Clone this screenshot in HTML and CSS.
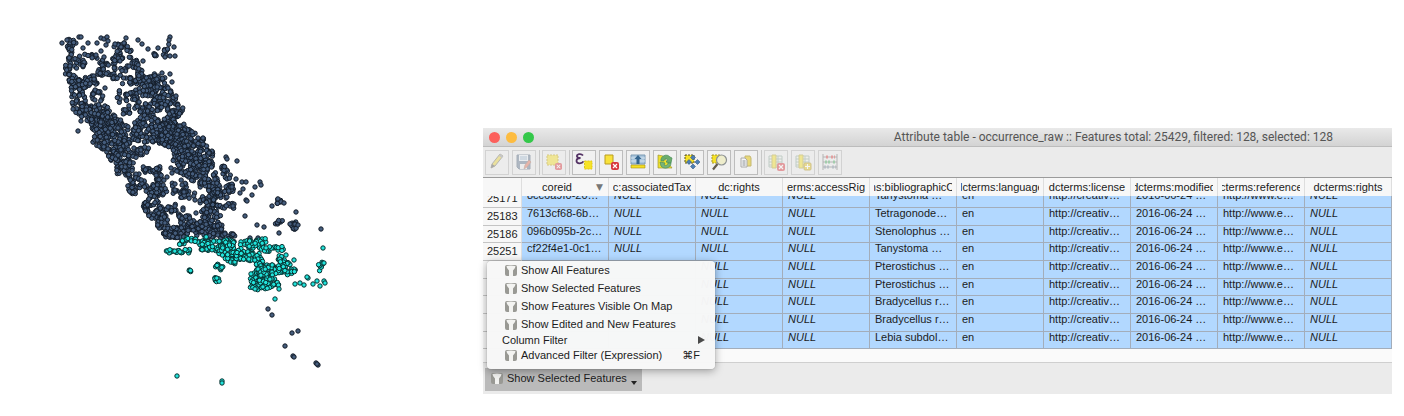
FILE: index.html
```html
<!DOCTYPE html>
<html lang="en">
<head>
<meta charset="utf-8">
<title>Attribute table</title>
<link rel="stylesheet" href="styles.css">
</head>
<body>
<svg width="0" height="0" class="defs" aria-hidden="true">
  <symbol id="filter" viewBox="0 0 12 12">
    <rect x="0" y="1" width="12" height="11" rx="2" fill="#999994"/>
    <path d="M1.500 2Q6 .8 10.500 2Q10.500 4.500 8 6.500V12H4V6.500Q1.500 4.500 1.500 2Z" fill="#f3f3f1"/>
  </symbol>
  <symbol id="deny" viewBox="0 0 8 8">
    <rect width="8" height="8" rx="2" fill="#d8383f"/><path d="M2 2l4 4M6 2L2 6" stroke="#fff" stroke-width="1.200"/>
  </symbol>
</svg>
<main class="page">
  <svg class="map" id="map" viewBox="0 0 483 416" role="img" aria-label="Occurrence map"></svg>
  <section class="window">
    <header class="titlebar">
      <div class="lights"><button class="light red" aria-label="Close"></button><button class="light amber" aria-label="Minimize"></button><button class="light green" aria-label="Zoom"></button></div>
      <h1 class="title">Attribute table - occurrence_raw :: Features total: 25429, filtered: 128, selected: 128</h1>
    </header>
    <div class="toolbar">
      <button class="tool" disabled aria-label="Toggle editing"><svg viewBox="0 0 18 18"><path d="M3 15l1-4L12 1l3 2L7 13z" fill="#e8d23e" stroke="#77756b"/><path d="M3 15l1-4 3 2z" fill="#555"/><path d="M12 1l3 2-1 2-3-2z" fill="#999"/></svg></button>
      <button class="tool" disabled aria-label="Save edits"><svg viewBox="0 0 18 18"><path d="M2 2h13v14H4l-2-2z" fill="#647991" stroke="#52667c"/><path d="M4 2h9v6H4z" fill="#e6edf3"/><path d="M5 4h7M5 6h7" stroke="#7a9ab8"/><path d="M5 11h7v5H5z" fill="#eee"/><path d="M9 16l1-4 4-5 2 2-4 5z" fill="#e5735b" stroke="#9d6a58" stroke-width=".7"/></svg></button>
      <span class="sep"></span>
      <button class="tool" disabled aria-label="Delete selected"><svg viewBox="0 0 18 18"><path d="M2 2h11v10H2z" fill="#f4de2c" stroke="#b99f0b" stroke-dasharray="2 1"/><use href="#deny" x="10" y="10" width="7" height="7"/></svg></button>
      <span class="sep"></span>
      <button class="tool" aria-label="Select by expression"><svg viewBox="0 0 18 18"><path d="M8 2.500C6 0 1.500 1 2 3.500Q2.400 5.300 5.500 5Q1.500 5.200 1.500 8C1.600 11 7 11 8.500 8.400" fill="none" stroke="#533264" stroke-width="1.800"/><path d="M9.500 8h7.500v8H9.500z" fill="#f7e326" stroke="#e0c61a" stroke-dasharray="2 1"/></svg></button>
      <button class="tool" aria-label="Unselect all"><svg viewBox="0 0 18 18"><path d="M3 2h8v9H3z" fill="#f8e23b" stroke="#b99c21"/><use href="#deny" x="9" y="9" width="8" height="8"/></svg></button>
      <button class="tool" aria-label="Move selection to top"><svg viewBox="0 0 18 18"><path d="M2 2h14v9H2z" fill="#a9c6dd" stroke="#7d9ab3"/><path d="M2 5h14M2 8h14" stroke="#d5e4ef"/><path d="M9 2l3.500 4H10.500v5h-3V6H5.500z" fill="#34658f"/><path d="M2 12h14v3H2z" fill="#f6df22" stroke="#a69018" stroke-width=".6"/></svg></button>
      <button class="tool" aria-label="Invert selection"><svg viewBox="0 0 18 18"><path d="M2 2l5 1 9 12H2z" fill="#efe12c" stroke="#9f9636" stroke-width=".7"/><path d="M5 8C4 3 11 0 14 4l2 1-1 5-5-1 2-2C10 5 8 6 8 8z" fill="#6aac6b" stroke="#488c57" stroke-width=".7"/><path d="M15 10c0 5-7 7-10 3l-1-4 5 1-1 2c2 1 4 0 4-2z" fill="#79b479" stroke="#4a8f5b" stroke-width=".7"/></svg></button>
      <button class="tool" aria-label="Pan to selection"><svg viewBox="0 0 18 18"><path d="M2 2h9v8H2z" fill="#f5e127" stroke="#554e20" stroke-dasharray="2 1"/><path d="M10 2l2.500 2.500L10 7 7.500 4.500zM14.500 6.500L17 9l-2.500 2.500L12 9zM6 6.500L8.500 9 6 11.500 3.500 9zM10 11l2.500 2.500L10 16l-2.500-2.500z" fill="#4d7eb4" stroke="#365d87" stroke-width=".6"/></svg></button>
      <button class="tool" aria-label="Zoom to selection"><svg viewBox="0 0 18 18"><path d="M2 2h9v8H2z" fill="#f5e127" stroke="#a4962d" stroke-dasharray="2 1"/><circle cx="11.500" cy="7" r="5" fill="#eeedcc" stroke="#8d9293" stroke-width="1.200"/><path d="M7.500 11L3 16.500" stroke="#635b4c" stroke-width="2.200"/></svg></button>
      <button class="tool" aria-label="Copy rows"><svg viewBox="0 0 18 18"><path d="M8 3h5l1 2v8H8z" fill="#e8d878" stroke="#c5b873"/><path d="M4 5h4l2 2v7H4z" fill="#f5f5f5" stroke="#aaa"/><path d="M5.500 8h3M5.500 10h3M5.500 12h3" stroke="#8c9298"/></svg></button>
      <span class="sep"></span>
      <button class="tool" disabled aria-label="Delete column"><svg viewBox="0 0 18 18"><path d="M2 3h13v11H2zM2 6h13M2 9h13M2 12h13M11 3v11" fill="#edf2ed" stroke="#8fa89b"/><path d="M5 2h4v13H5z" fill="#f3df27" stroke="#b7a732"/><use href="#deny" x="10" y="10" width="8" height="8"/></svg></button>
      <button class="tool" disabled aria-label="New column"><svg viewBox="0 0 18 18"><path d="M2 3h13v11H2zM2 6h13M2 9h13M2 12h13M11 3v11" fill="#edf2ed" stroke="#8fa89b"/><path d="M5 2h4v13H5z" fill="#f3df27" stroke="#b7a732"/><rect x="10" y="10" width="7" height="7" rx="1" fill="#e5c31f" stroke="#af9115"/><path d="M13.500 11v5M11 13.500h5" stroke="#fff"/></svg></button>
      <button class="tool" disabled aria-label="Field calculator"><svg viewBox="0 0 18 18"><path d="M2 1v16M16 1v16M2 4h14M2 9h14M2 14h14" stroke="#737373"/><path d="M5 4h3M10 4h4" stroke="#d64040" stroke-width="3" stroke-dasharray="2 1"/><path d="M4 9h5M12 9h3" stroke="#4da960" stroke-width="3" stroke-dasharray="2 1"/><path d="M3 14h5M11 14h4" stroke="#7d8b9b" stroke-width="3" stroke-dasharray="2 1"/></svg></button>
    </div>
    <table class="grid">
      <colgroup><col class="num-col"><col span="10"></colgroup>
      <thead><tr>
        <th></th>
        <th><div class="head sorted">coreid<span class="sort">▼</span></div></th>
        <th><div class="head">dc:associatedTaxa</div></th>
        <th><div class="head">dc:rights</div></th>
        <th><div class="head">dcterms:accessRights</div></th>
        <th><div class="head">dcterms:bibliographicCitation</div></th>
        <th><div class="head">dcterms:language</div></th>
        <th><div class="head">dcterms:license</div></th>
        <th><div class="head">dcterms:modified</div></th>
        <th><div class="head">dcterms:references</div></th>
        <th><div class="head">dcterms:rights</div></th>
      </tr></thead>
      <tbody>
        <tr class="cut"><th><div>25171</div></th><td><div>8cc6a9f0-20…</div></td><td><div><i>NULL</i></div></td><td><div><i>NULL</i></div></td><td><div><i>NULL</i></div></td><td><div>Tanystoma …</div></td><td><div>en</div></td><td><div>http://creativ…</div></td><td><div>2016-06-24 …</div></td><td><div>http://www.e…</div></td><td><div><i>NULL</i></div></td></tr>
        <tr><th>25183</th><td>7613cf68-6b…</td><td><i>NULL</i></td><td><i>NULL</i></td><td><i>NULL</i></td><td>Tetragonode…</td><td>en</td><td>http://creativ…</td><td>2016-06-24 …</td><td>http://www.e…</td><td><i>NULL</i></td></tr>
        <tr><th>25186</th><td>096b095b-2c…</td><td><i>NULL</i></td><td><i>NULL</i></td><td><i>NULL</i></td><td>Stenolophus …</td><td>en</td><td>http://creativ…</td><td>2016-06-24 …</td><td>http://www.e…</td><td><i>NULL</i></td></tr>
        <tr><th>25251</th><td>cf22f4e1-0c1…</td><td><i>NULL</i></td><td><i>NULL</i></td><td><i>NULL</i></td><td>Tanystoma …</td><td>en</td><td>http://creativ…</td><td>2016-06-24 …</td><td>http://www.e…</td><td><i>NULL</i></td></tr>
        <tr><th></th><td></td><td></td><td><i>NULL</i></td><td><i>NULL</i></td><td>Pterostichus …</td><td>en</td><td>http://creativ…</td><td>2016-06-24 …</td><td>http://www.e…</td><td><i>NULL</i></td></tr>
        <tr><th></th><td></td><td></td><td><i>NULL</i></td><td><i>NULL</i></td><td>Pterostichus …</td><td>en</td><td>http://creativ…</td><td>2016-06-24 …</td><td>http://www.e…</td><td><i>NULL</i></td></tr>
        <tr><th></th><td></td><td></td><td><i>NULL</i></td><td><i>NULL</i></td><td>Bradycellus r…</td><td>en</td><td>http://creativ…</td><td>2016-06-24 …</td><td>http://www.e…</td><td><i>NULL</i></td></tr>
        <tr><th></th><td></td><td></td><td><i>NULL</i></td><td><i>NULL</i></td><td>Bradycellus r…</td><td>en</td><td>http://creativ…</td><td>2016-06-24 …</td><td>http://www.e…</td><td><i>NULL</i></td></tr>
        <tr><th></th><td></td><td></td><td><i>NULL</i></td><td><i>NULL</i></td><td>Lebia subdol…</td><td>en</td><td>http://creativ…</td><td>2016-06-24 …</td><td>http://www.e…</td><td><i>NULL</i></td></tr>
      </tbody>
    </table>
    <div class="scroll"></div>
    <footer class="footer">
      <button class="picker"><svg class="ico"><use href="#filter"/></svg>Show Selected Features<span class="caret"></span></button>
      <div class="menu">
        <button class="item"><svg class="ico"><use href="#filter"/></svg>Show All Features</button>
        <button class="item"><svg class="ico"><use href="#filter"/></svg>Show Selected Features</button>
        <button class="item"><svg class="ico"><use href="#filter"/></svg>Show Features Visible On Map</button>
        <button class="item"><svg class="ico"><use href="#filter"/></svg>Show Edited and New Features</button>
        <button class="item plain">Column Filter<span class="arrow"></span></button>
        <button class="item low"><svg class="ico"><use href="#filter"/></svg>Advanced Filter (Expression)<span class="key">⌘F</span></button>
      </div>
    </footer>
  </section>
</main>
<script src="map.js"></script>
</body>
</html>
```
FILE: styles.css
```css
* { box-sizing: border-box; }
body { margin: 0; background: #fff; color: #1c1c1c; font: 11px/14px "Liberation Sans", Arial, sans-serif; }
button { font: inherit; color: inherit; border: 0; padding: 0; margin: 0; background: none; text-align: left; }
.defs { position: absolute; }
.page { display: grid; grid-template-columns: 483fr 909fr 12fr; align-items: start; }
.map { display: block; width: 100%; }
.window { margin-top: 128px; min-width: 0; background: #ebebeb; }

.titlebar { display: flex; align-items: center; justify-content: space-between; height: 19px; padding: 0 59px 0 6px; background: linear-gradient(#e9e9e9, #d3d3d3); border-bottom: 1px solid #bcbcbc; }
.lights { display: flex; gap: 6px; }
.light { width: 11px; height: 11px; border-radius: 50%; }
.red { background: #fc605c; }
.amber { background: #fdbc40; }
.green { background: #34c84a; }
.title { margin: 0; font: 12px/14px Roboto, sans-serif; color: #555; white-space: nowrap; }

.toolbar { display: flex; align-items: center; gap: 3px; height: 31px; padding: 0 2px; border-bottom: 1px solid #9b9b9b; }
.tool { display: flex; align-items: center; justify-content: center; width: 24px; height: 25px; background: #f1f1f1; border: 1px solid #bdbdbd; }
.tool svg { width: 18px; height: 18px; }
.tool:disabled { border-color: #d2d2d2; background: #ececec; }
.tool:disabled svg { opacity: .45; }
.sep { width: 1px; height: 25px; margin-right: -1px; background: #c8c8c8; }

.grid { width: 100%; table-layout: fixed; border-collapse: separate; border-spacing: 0; }
.num-col { width: 39px; }
.grid th, .grid td { padding: 0; font-weight: 400; white-space: nowrap; overflow: hidden; text-align: left; }
.grid thead th { height: 18px; background: #f7f7f7; border-right: 1px solid #dedede; }
.head { display: flex; justify-content: center; margin: 0 4px; overflow: hidden; position: relative; }
.sorted { padding-right: 16px; }
.sort { position: absolute; right: 1px; font: 9px/14px "DejaVu Sans", sans-serif; color: #777; }
.grid tbody td { height: 18px; padding: 0 0 2px 5px; line-height: 11px; vertical-align: top; background: #b2d8ff; border-right: 1px solid #a3adba; border-bottom: 1px solid #a3adba; }
.grid tbody tr:nth-child(3n) td, .grid tbody tr:nth-child(3n) th { height: 17px; }
.grid tbody th { height: 18px; padding: 0 0 0 4px; vertical-align: top; line-height: 16px; background: #f7f7f7; border-right: 1px solid #dedede; border-bottom: 1px solid #c4c4c4; }
.grid tbody .cut td, .grid tbody .cut th { height: 12px; padding-top: 0; padding-bottom: 0; }
.cut div { display: flex; align-items: flex-end; height: 11px; padding-bottom: 6px; overflow: hidden; }
.cut th div { padding-bottom: 1px; }
.scroll { height: 14px; background: #fafafa; border-bottom: 1px solid #cfcfcf; }

.footer { position: relative; height: 31px; padding: 5px 2px 3px; }
.picker { display: flex; align-items: center; width: 157px; height: 23px; padding: 0 0 3px 6px; background: #bababa; white-space: nowrap; }
.ico { flex: none; width: 12px; height: 12px; margin-right: 4px; }
.caret { margin: 10px 0 0 4px; border: 3px solid transparent; border-top: 4px solid #222; border-bottom: 0; }
.menu { position: absolute; left: 4px; bottom: 25px; width: 228px; padding: 0 0 6px; background: rgba(247, 247, 247, .98); border-radius: 4px; box-shadow: 0 2px 8px rgba(0, 0, 0, .35), 0 0 1px rgba(0, 0, 0, .4); }
.item { display: flex; align-items: center; width: 100%; height: 18px; padding: 0 10px 0 18px; white-space: nowrap; }
.item.plain { height: 14px; padding-left: 15px; }
.item.low { height: 16px; }
.arrow { margin-left: auto; border: 4px solid transparent; border-left: 7px solid #4a4a4a; border-right: 0; }
.key { margin-left: auto; padding-right: 5px; font-family: "Liberation Sans", "DejaVu Sans", sans-serif; }
```
FILE: map.js
```js
var SVG = 'http://www.w3.org/2000/svg';
var map = document.getElementById('map');
var seed = 77;
function rand() { seed = (seed * 16807) % 2147483647; return seed / 2147483647; }

// Bare ground: [cx, cy, rx, ry]
var gaps = [[104,84,7,4],[111,97,6,12],[128,120,7,5],[122,106,4,4],[84,71,6,4],[164,114,4,4],[137,183,4,3],[99,96,3,3],
  [148,160,9,3],[153,166,4,4],[176,177,4,5],[186,204,9,6],[164,201,4,4],[127,90,4,4],[155,124,2,2],[166,173,3,4],[196,212,4,8],[196,186,3,3],[153,208,4,3],[172,222,5,3]];

// Sampling tracks: [width, spacing area, x, y, x, y, ...]
var dark = [
  [7,7,69,42,76,42],[5,7,70,46,70,58,66,74],[13,9,74,66,84,61],[10,8,68,78,90,84,100,72,106,62],[4,9,84,56,98,57],
  [12,7,112,56,122,54],[5,10,114,47,126,45,130,52],[7,8,130,56,137,68,141,76],[7,9,98,71,120,77],[5,10,121,70,130,67],[3,9,114,60,115,70],
  [8,8,122,80,150,80],[6,10,150,78,168,80],[10,8,138,72,150,88],[3,16,118,78,119,104],[15,8,78,80,80,110],[12,9,92,94,108,101],
  [11,9,90,108,110,111],[9,9,125,98,142,92],[6,9,136,96,138,112],[22,8,147,82,162,95,170,112,178,118],[12,8,80,108,98,125],
  [22,8,92,118,128,132],[24,8,140,112,176,124],[9,9,122,112,130,110],[28,8,100,130,124,150],[20,8,118,146,134,160],[20,8,132,132,180,134],
  [10,7,178,126,194,136],[22,8,152,130,184,142,184,162],[14,9,184,148,206,142],[10,8,112,154,122,172],[14,8,124,162,134,174,134,194],
  [8,9,138,152,150,148],[6,9,140,170,160,169],[8,9,154,168,166,194],[22,8,178,160,202,172],[14,8,196,156,214,158],[12,8,206,162,212,182],
  [14,7,210,180,218,200],[9,9,216,194,232,186],[6,9,222,166,230,180],[7,10,195,194,180,196],[7,9,143,204,158,202],[10,7,144,206,162,220],
  [8,9,158,210,176,208],[12,7,162,214,164,234],[9,7,164,236,190,232],[12,7,172,232,216,228],[9,7,210,232,235,238],[9,8,212,200,220,230],
  [8,8,180,220,204,226],[10,7,204,196,208,224],[10,9,186,170,204,184],[6,9,184,180,184,198],[6,9,220,206,234,206],[4,12,172,214,190,218],[8,10,140,182,160,192],
  [12,9,146,196,160,186],[5,14,172,182,176,194],[6,6,230,184,232,192],[4,6,222,166,226,172],[5,6,277,198,279,203],[5,5,294,219,294,230],[4,6,274,224,282,220],[4,10,164,57,168,44],[4,8,153,52,155,57]
];
var cyan = [
  [4,6,166,251,195,251],[4,6,180,246,185,239,196,240],[8,7,195,243,210,240],[10,6,200,247,235,244],[15,6,220,246,240,260],
  [9,6,240,246,266,243],[9,6,235,254,262,258],[5,8,260,250,284,248],[6,8,275,254,294,272],[8,7,254,262,284,270],[17,6,258,268,264,288],
  [18,6,266,266,270,288],[6,7,251,278,254,290],[5,8,284,272,294,274],[5,4,216,266,222,269],[4,4,215,277,219,282],[3,4,189,271,191,272],[4,8,322,261,318,271]
];
var darkPoints = [62,43,67,40,79,37,81,37,88,43,97,43,83,48,101,38,104,39,107,37,108,41,106,45,115,44,121,47,126,38,124,43,138,40,142,44,148,49,
  158,48,143,61,170,37,169,40,174,47,165,57,170,56,175,56,162,73,170,74,172,82,176,96,168,88,101,51,96,55,104,57,120,61,105,88,
  78,131,81,121,198,138,203,138,226,157,227,159,237,161,236,179,242,182,246,182,243,189,240,193,260,182,261,185,255,187,252,195,246,200,247,201,
  272,206,284,203,296,212,233,206,245,216,257,225,264,227,279,233,321,229,250,238,258,238,268,309,272,315,292,333,298,331,285,346,293,356,294,357,
  316,363,318,365,317,364,171,168,175,184,175,190,175,206,183,208,183,210,168,207,167,177,172,173,184,192,196,213,195,200,200,176,290,224,298,225,226,198,227,197];
var cyanPoints = [286,255,294,260,323,248,324,263,295,284,300,283,304,285,308,278,307,277,313,284,317,281,320,286,324,281,325,283,275,299,279,289,177,376,222,381,222,383];

function dot(x, y, fill, ring) {
  var c = document.createElementNS(SVG, 'circle');
  c.setAttribute('cx', x.toFixed(1));
  c.setAttribute('cy', y.toFixed(1));
  c.setAttribute('r', 2.2);
  c.setAttribute('fill', fill);
  c.setAttribute('stroke', ring);
  map.appendChild(c);
}
function inGap(x, y) {
  return gaps.some(function (g) { var a = (x - g[0]) / g[2], b = (y - g[1]) / g[3]; return a * a + b * b < 1; });
}
function plot(tracks, points, fill, ring) {
  tracks.forEach(function (t) {
    for (var i = 2; i + 3 < t.length; i += 2) {
      var dx = t[i + 2] - t[i], dy = t[i + 3] - t[i + 1], len = Math.hypot(dx, dy);
      var n = Math.ceil(len * t[0] / t[1]) + 2;
      while (n--) {
        var s = rand(), o = (rand() - .5) * t[0];
        var x = t[i] + dx * s - dy / len * o, y = t[i + 1] + dy * s + dx / len * o;
        if (!inGap(x, y)) dot(x, y, fill, ring);
      }
    }
  });
  for (var k = 0; k < points.length; k += 2) dot(points[k], points[k + 1], fill, ring);
}
plot(dark, darkPoints, '#455d7d', '#141d29');
plot(cyan, cyanPoints, '#22e4dc', '#07302f');
```
